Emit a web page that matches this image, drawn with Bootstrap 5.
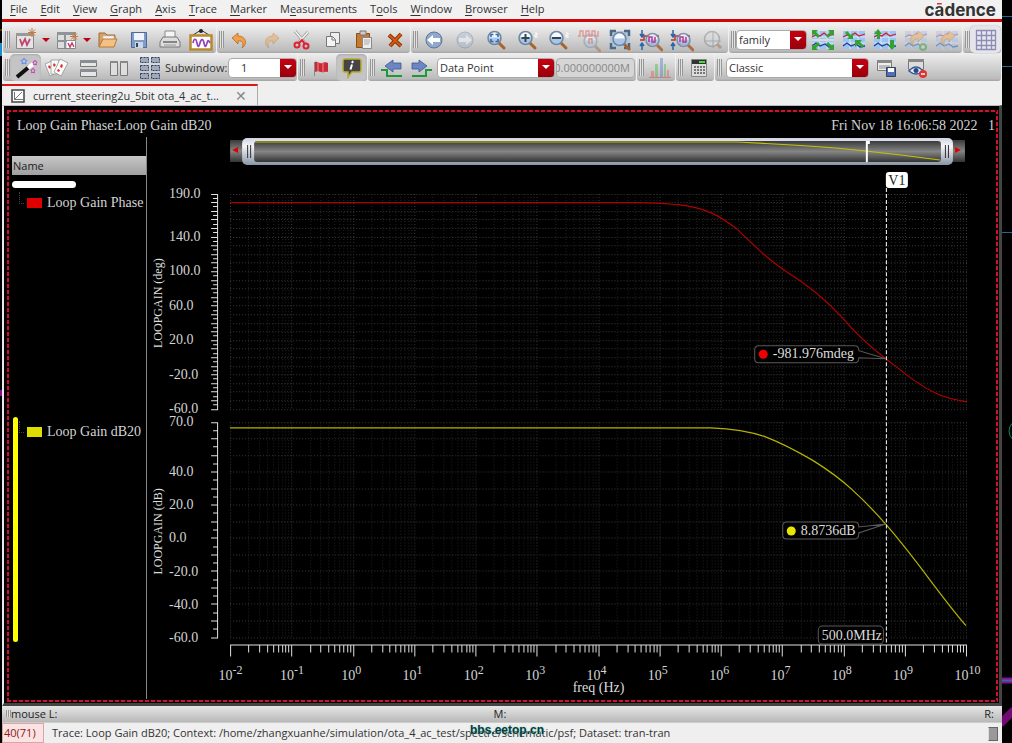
<!DOCTYPE html>
<html lang="en">
<head>
<meta charset="utf-8">
<meta name="viewport" content="width=device-width, initial-scale=1">
<title>Waveform viewer</title>
<link href="https://cdn.jsdelivr.net/npm/bootstrap@5.3.0/dist/css/bootstrap.min.css" rel="stylesheet">
<style>
body{background:#000;color:#333;font:11px/16px "Open Sans","Noto Sans",sans-serif;overflow:hidden}
.desk{display:grid;grid-template-columns:2px minmax(0,1fr) 10px;min-height:100vh}
.app-menu{background:#f1f1f1;height:22px;border-bottom:3px solid #cd0606;padding:0 6px 0 8px}
.app-menu a{color:#333;text-decoration:none;line-height:18px}
.app-menu u{text-underline-offset:2px}
.brand{font:bold 17px/20px Inter,sans-serif;color:#333}
.brand span{background:linear-gradient(#e03030 0 6px,#333 6px);-webkit-background-clip:text;background-clip:text;color:transparent}
.bars{background:#efefef;padding:4px 1px 0}
.tool-row{gap:1px;height:28px}
.tool-group{height:27px;padding:0 0 0 2px;background:linear-gradient(#ececec,#d4d4d4 45%,#bbb 92%,#a2a2a2);border-radius:3px}
.grip{width:5px;height:17px;flex:none;background:repeating-linear-gradient(90deg,#969696 0 1px,#e2e2e2 1px 2px)}
.tb{border:0;background:none;padding:0;width:31px;height:27px;flex:none;display:flex;align-items:center;justify-content:center}
.tb.pressed{background:#c4c4c4;border-radius:5px;box-shadow:inset 0 1px 2px #aaa}
.tb.lit{background:#e4e4ea;border-radius:5px;box-shadow:0 0 2px #aaa}
.tb svg{width:24px;height:24px}
.tb.drop{width:10px}
.tb.drop svg{width:8px;height:8px}
.dim{opacity:.42}
.pick{height:20px;border:1px solid #aaa;border-radius:4px;font-size:11px;line-height:16px;color:#333;padding:0 18px 0 2px;appearance:none;flex:none;
background:url("data:image/svg+xml,%3Csvg xmlns='http://www.w3.org/2000/svg' viewBox='0 0 8 5'%3E%3Cpath d='M0 0h8L4 4z' fill='%23fff'/%3E%3C/svg%3E") no-repeat right 4px center/8px 5px,linear-gradient(#c60010,#98000b) no-repeat right/16px 100%,#fff}
.w-sub{width:69px;padding-left:12px}.w-fam{width:71px}.w-point{width:118px}.w-classic{width:143px}
.sub-label{width:63px;white-space:nowrap}
.val{width:79px;height:20px;border:1px solid #aaa;border-radius:4px;background:#d6d6d6;color:#888;font-size:11px;padding:0 4px 0 0;direction:rtl;margin:0 1px}
.tabs{background:#efefef;height:23px}
.tab-one{width:256px;height:21px;border-top:2px solid #d81818;border-right:1px solid #aaa;padding:0 10px 0 9px;margin-top:2px}
.tab-one .closer{border:0;background:none;padding:0;color:#888;font-size:14px;line-height:14px}
.plot-frame{background:#000;border:solid;border-width:1px 3px 3px 2px;border-color:#bbb #444 #444 #e8e8ee;padding:4px 1px 1px 3px;color:#d4d4d4;font-family:"Liberation Serif",serif;font-size:14px}
.plot-edge{--h:repeating-linear-gradient(90deg,#cb1330 0 4px,#2b0008 4px 6px);--v:repeating-linear-gradient(#cb1330 0 4px,#2b0008 4px 6px);
background:var(--h) top/100% 2px,var(--h) bottom/100% 2px,var(--v) left/2px 100%,var(--v) right/2px 100%;background-repeat:no-repeat;padding:6px 3px 3px}
.plot-head{height:21px;padding:0 0 0 7px;line-height:20px}
.legend-col{width:137px;flex:none;border-right:1px solid #888;padding:19px 0 0 2px}
.legend-name{background:linear-gradient(#c6c6c6,#a0a0a0);color:#222;font:11px/19px "Open Sans",sans-serif;padding-left:1px}
.pill{width:64px;height:7px;border-radius:4px;background:#fff;margin-top:6px}
.strip{border-left:5px solid transparent;padding-left:1px}
.strip-a{height:229px}
.strip-b{height:225px;position:relative}
.strip-b::before{content:"";position:absolute;left:-4px;top:0;bottom:0;width:5px;border-radius:3px;background:#ff0}
.entry{gap:5px;line-height:30px;white-space:nowrap}
.elbow{width:5px;height:12px;border:1px dotted #444;border-width:0 0 1px 1px;margin:0 -2px 10px 1px}
.swatch{width:15px;height:10px;flex:none}
.chart{display:block;width:100%;height:auto}
.mouse-bar{background:linear-gradient(#e6e6e6,#b8b8b8);height:16px;padding:0 8px 0 4px;color:#222}
.status{background:#efefef;height:20px;border-top:1px solid #ccc;flex:1 0 auto;line-height:19px;color:#333}
.count{width:42px;background:#fbe3e3;border:1px solid #d9a5a5;color:#822;padding-left:1px;line-height:17px}
.water{position:absolute;left:468px;top:-3px;font:bold 12px/20px "Liberation Sans",sans-serif;color:#063c3c;text-shadow:0 0 2px #8fd8c8}
.thumb{width:10px;height:14px;background:#999;border:1px solid #666;border-left-color:#ddd}
</style>
</head>
<body>
<svg width="0" height="0" class="position-absolute" aria-hidden="true">
<defs>
<symbol id="lens" viewBox="0 0 24 24"><path d="M15 15l5 5" stroke="#a9622a" stroke-width="3" stroke-linecap="round"/><circle cx="10.500" cy="10" r="6.500" fill="#a9c6e6" stroke="#71879e" stroke-width="1.500"/><path d="M5.500 9.500a5 5 0 0 1 10 0z" fill="#f4f9ff"/></symbol>
<symbol id="waves" viewBox="0 0 24 24"><path d="M1 3h22v18H1z" fill="#9cc3f2"/><path d="M1 9h22M1 15h22M8 3v18M16 3v18" stroke="#dbe9fb"/><path d="M1 9l4-2 4 1 4-3 4 3 6-2" fill="none" stroke="#d02030" stroke-width="1.300"/><path d="M1 18l4-3 4 3 5-2 4 3 5-1" fill="none" stroke="#223f8f" stroke-width="1.300"/></symbol>
<symbol id="curl" viewBox="0 0 24 24"><path d="M4 10l6-5v3c8 0 10 8 4 12 2-4 1-8-4-7v3z" fill="#f0a04b" stroke="#b8681c" stroke-width=".8"/></symbol>
</defs>
</svg>
<div class="desk">
<svg width="2" height="743" aria-hidden="true"><path d="M0 43h2v13H0z" fill="#1a8fd0"/><path d="M0 30h2" stroke="#a60"/><path d="M0 393h2" stroke="#818" stroke-width="6"/></svg>
<main class="d-flex flex-column">
<nav class="app-menu d-flex align-items-start" aria-label="Main menu">
<div class="d-flex flex-grow-1" style="gap:13px">
<a href="#"><u>F</u>ile</a><a href="#"><u>E</u>dit</a><a href="#"><u>V</u>iew</a><a href="#"><u>G</u>raph</a><a href="#"><u>A</u>xis</a><a href="#"><u>T</u>race</a><a href="#"><u>M</u>arker</a><a href="#">M<u>e</u>asurements</a><a href="#">T<u>o</u>ols</a><a href="#"><u>W</u>indow</a><a href="#"><u>B</u>rowser</a><a href="#"><u>H</u>elp</a>
</div>
<div class="brand">c<span>ā</span>dence</div>
</nav>

<div class="bars">
<div class="tool-row d-flex">
<div class="tool-group d-flex align-items-center"><i class="grip"></i>
<button class="tb" aria-label="New window"><svg viewBox="0 0 24 24"><path d="M2.500 5.500h17v15h-17z" fill="#e4e4e4" stroke="#888"/><path d="M2 5h18v3H2z" fill="#999"/><path d="M6 11l2 6 3-6 2 6 3-6" fill="none" stroke="#c04070" stroke-width="1.700"/><path d="M18 0v9M14 4.500h8M15 1.500l6 6M21 1.500l-6 6" stroke="#c77a38"/></svg></button>
<button class="tb drop" aria-label="Window options"><svg viewBox="0 0 8 8"><path d="M0 2h8L4 6z" fill="#c00010"/></svg></button>
<button class="tb" aria-label="New subwindow"><svg viewBox="0 0 24 24"><path d="M2.500 4.500h18v16h-18z" fill="#ddd" stroke="#888"/><path d="M2 4h19v3H2zM9 6h2v14H9zM2 12h19v2H2z" fill="#8e949a"/><path d="M12 13h8v7h-8z" fill="#fff"/><path d="M13 15l2 4 2-4 2 4" fill="none" stroke="#c04070" stroke-width="1.500"/><path d="M19 4v9M15 8.500h8M16 5.500l6 6M22 5.500l-6 6" stroke="#c77a38"/></svg></button>
<button class="tb drop" aria-label="Subwindow options"><svg viewBox="0 0 8 8"><path d="M0 2h8L4 6z" fill="#c00010"/></svg></button>
<button class="tb" aria-label="Open"><svg viewBox="0 0 24 24"><path d="M3 19V5h6l2 2h8v4" fill="#d9a066" stroke="#a66a2c"/><path d="M7 8h11v8H7z" fill="#f7f7f7" stroke="#bbb" stroke-width=".7"/><path d="M3 19l4-8h14l-3 8z" fill="#f4c183" stroke="#b67a3a"/></svg></button>
<button class="tb" aria-label="Save"><svg viewBox="0 0 24 24"><path d="M4.500 4.500h15v15h-15z" fill="#7f9cc8" stroke="#4d6a9b"/><path d="M7 5h10v7H7z" fill="#f0f4fa"/><path d="M8 14h8v6H8z" fill="#ccd6e8"/><path d="M9 15h2v4H9z" fill="#345"/></svg></button>
<button class="tb" aria-label="Print"><svg viewBox="0 0 24 24"><path d="M7 3h10v9H7z" fill="#f6f6f6" stroke="#888"/><path d="M5 9h14l3 5v5H2v-5z" fill="#ddd" stroke="#777"/><path d="M5 14h14" stroke="#666" stroke-width="1.500"/><path d="M6 17h12" stroke="#999"/></svg></button>
<button class="tb" aria-label="Snapshot"><svg viewBox="0 0 24 24"><path d="M4 7l8-5 8 5" fill="none" stroke="#333"/><circle cx="12" cy="3" r="2" fill="#222"/><path d="M1.500 7.500h21v14h-21z" fill="#fff" stroke="#b88a30" stroke-width="2.500"/><path d="M4 15c1-5 3-5 4 0s2 4 3 0 3-5 4 0 2 4 3 0 2-2 3 0" fill="none" stroke="#9442b8" stroke-width="1.700"/></svg></button>
</div>
<div class="tool-group d-flex align-items-center"><i class="grip"></i>
<button class="tb" aria-label="Undo"><svg viewBox="0 0 24 24"><use href="#curl"/></svg></button>
<button class="tb dim" aria-label="Redo"><svg viewBox="0 0 24 24"><use href="#curl" transform="matrix(-1 0 0 1 24 0)"/></svg></button>
<button class="tb" aria-label="Cut"><svg viewBox="0 0 24 24"><path d="M5 3l10 12M18 4L9 14" stroke="#999" stroke-width="3"/><path d="M5 3l10 12M18 4L9 14" stroke="#f4f4f4" stroke-width="1.500"/><circle cx="7" cy="17" r="2.500" fill="none" stroke="#d23" stroke-width="2"/><circle cx="16" cy="18" r="2.500" fill="none" stroke="#d23" stroke-width="2"/><path d="M9 15l3-3 3 4" fill="none" stroke="#d23" stroke-width="2"/></svg></button>
<button class="tb" aria-label="Copy"><svg viewBox="0 0 24 24"><path d="M9.500 4.500h9v11h-9z" fill="#eee" stroke="#777"/><path d="M5.500 8.500h6l3 3v7h-9z" fill="#f4f4f4" stroke="#777"/><path d="M11 9v3h3" fill="none" stroke="#777"/></svg></button>
<button class="tb" aria-label="Paste"><svg viewBox="0 0 24 24"><path d="M4.500 5.500h13v14h-13z" fill="#c67a34" stroke="#8d4d16"/><path d="M8 3h6v4H8z" fill="#ccc" stroke="#777"/><path d="M10.500 9.500h9v11h-9z" fill="#eee" stroke="#888"/><path d="M12 12h6M12 14h6M12 16h5" stroke="#aaa"/></svg></button>
<button class="tb" aria-label="Delete"><svg viewBox="0 0 24 24"><path d="M6 7l12 11M18 6L7 18" stroke="#8c3100" stroke-width="4"/><path d="M6 7l12 11M18 6L7 18" stroke="#cf5a12" stroke-width="2"/></svg></button>
</div>
<div class="tool-group d-flex align-items-center"><i class="grip"></i>
<button class="tb" aria-label="Previous view"><svg viewBox="0 0 24 24"><circle cx="12" cy="12" r="8" fill="#8fa9cc" stroke="#5c7498"/><path d="M5 12l6-5v3h7v4h-7v3z" fill="#fff"/></svg></button>
<button class="tb dim" aria-label="Next view"><svg viewBox="0 0 24 24"><circle cx="12" cy="12" r="8" fill="#a9bbd6" stroke="#6a7d9d"/><path d="M19 12l-6-5v3H6v4h7v3z" fill="#fff"/></svg></button>
<button class="tb" aria-label="Fit"><svg viewBox="0 0 24 24"><use href="#lens"/><path d="M7 9V6.500h2.500M11.500 6.500H14V9M14 11v2.500h-2.500M9.500 13.500H7V11" fill="none" stroke="#3b6ba5" stroke-width="1.600"/></svg></button>
<button class="tb" aria-label="Zoom in"><svg viewBox="0 0 24 24"><use href="#lens"/><path d="M10.500 6v8M6.500 10h8" stroke="#345" stroke-width="2"/><path d="M20 5h2v2h-2v2h3" fill="none" stroke="#fff"/></svg></button>
<button class="tb" aria-label="Zoom out"><svg viewBox="0 0 24 24"><use href="#lens"/><path d="M6 10h9" stroke="#345" stroke-width="2"/><path d="M20 5h2v2h-2v2h3" fill="none" stroke="#fff"/></svg></button>
<button class="tb dim" aria-label="Zoom trace"><svg viewBox="0 0 24 24"><use href="#lens" x="3" y="3"/><path d="M1 8h2V3h3v5h3V3h3v5h3V3h3v5h3V3M12 16v-5h3v5" fill="none" stroke="#d33" stroke-width="1.300"/></svg></button>
<button class="tb" aria-label="Zoom area"><svg viewBox="0 0 24 24"><path d="M2 3h20v17H2z" fill="#b4c6da"/><path d="M3 8V3h5M16 3h5v5M21 15v5h-5M8 20H3v-5" fill="none" stroke="#4b6884" stroke-width="2.500"/><use href="#lens" x="1" y="1"/></svg></button>
<button class="tb" aria-label="Zoom Y"><svg viewBox="0 0 24 24"><path d="M3 2v7M3 22v-7M1 6l2 3 2-3M1 18l2-3 2 3" fill="none" stroke="#2466a8" stroke-width="1.500"/><path d="M1 12h4V8h5v8h5V8h5" fill="none" stroke="#b33" stroke-width="1.500"/><use href="#lens" x="3" y="2" opacity=".85"/><path d="M10 14v-5h3v5h3V9" fill="none" stroke="#b0389a" stroke-width="1.500"/></svg></button>
<button class="tb" aria-label="Zoom X"><svg viewBox="0 0 24 24"><path d="M3 2v7M3 22v-7M1 6l2 3 2-3M1 18l2-3 2 3" fill="none" stroke="#2466a8" stroke-width="1.500"/><path d="M1 12h4V8h5v8h5V8h5" fill="none" stroke="#b33" stroke-width="1.500"/><use href="#lens" x="3" y="2" opacity=".85"/><path d="M10 14v-5h3v5h3V9" fill="none" stroke="#b0389a" stroke-width="1.500"/></svg></button>
<button class="tb dim" aria-label="Zoom reset"><svg viewBox="0 0 24 24"><path d="M15 15l5 5" stroke="#a9622a" stroke-width="3"/><circle cx="11" cy="11" r="7.500" fill="#d8dde2" stroke="#777" stroke-width="1.500"/><path d="M3 13h17M12 3v17" stroke="#777"/></svg></button>
</div>
<div class="tool-group d-flex align-items-center"><i class="grip"></i>
<select class="pick w-fam" aria-label="Scope"><option>family</option></select>
<button class="tb" aria-label="Expand"><svg viewBox="0 0 24 24"><use href="#waves"/><path d="M1 11h22v2H1z" fill="#dadada"/><path d="M1 2h6L5 4l4 4-2 2-4-4-2 2zM23 2h-6l2 2-4 4 2 2 4-4 2 2zM1 22h6l-2-2 4-4-2-2-4 4-2-2zM23 22h-6l2-2-4-4 2-2 4 4 2-2z" fill="#35a22c"/></svg></button>
<button class="tb" aria-label="Merge"><svg viewBox="0 0 24 24"><use href="#waves"/><path d="M11 11H5l2-2-4-4 2-2 4 4 2-2zM13 12h7l-2 2 4 4-2 2-4-4-3 3z" fill="#35a22c"/></svg></button>
<button class="tb" aria-label="Split"><svg viewBox="0 0 24 24"><use href="#waves"/><path d="M5 1l4 5H7v5H4V6H1zM19 22l-4-5h2v-5h4v5h2z" fill="#35a22c"/></svg></button>
<button class="tb dim" aria-label="Replay add"><svg viewBox="0 0 24 24"><use href="#waves"/><use href="#curl" transform="matrix(-1 0 0 1 24 -2)"/><circle cx="19" cy="19" r="4" fill="#2b9a2b"/><path d="M17 19h4M19 17v4" stroke="#fff"/></svg></button>
<button class="tb dim" aria-label="Replay"><svg viewBox="0 0 24 24"><use href="#waves"/><use href="#curl" transform="matrix(-1 0 0 1 24 -2)"/></svg></button>
</div>
<div class="tool-group d-flex align-items-center flex-grow-1"><i class="grip"></i>
<button class="tb lit" aria-label="Grid"><svg viewBox="0 0 24 24"><path d="M2 2h20v20H2z" fill="#e6e6f0"/><path d="M2.500 2v20M7.500 2v20M12.500 2v20M17.500 2v20M21.500 2v20M2 2.500h20M2 7.500h20M2 12.500h20M2 17.500h20M2 21.500h20" stroke="#8d8db4" stroke-width="1.300"/></svg></button>
</div>
</div>

<div class="tool-row d-flex">
<div class="tool-group d-flex align-items-center"><i class="grip"></i>
<button class="tb pressed" aria-label="Wand"><svg viewBox="0 0 24 24"><path d="M3 21L15 11" stroke="#111" stroke-width="4"/><path d="M14 12l5-4" stroke="#fff" stroke-width="4"/><path d="M10 2l1 2 2 .5-1.500 1.500.5 2-2-1-2 1 .5-2L7 4.500 9 4z" fill="none" stroke="#58f"/><path d="M21 4l.7 1.500 1.500.5-1 1 .2 2-1.400-.8-1.400.8.2-2-1-1 1.500-.5zM19 12l.7 1.500 1.500.5-1 1 .2 2-1.400-.8-1.400.8.2-2-1-1 1.500-.5z" fill="none" stroke="#c4b"/></svg></button>
<button class="tb" aria-label="Cards"><svg viewBox="0 0 24 24"><g fill="#fafafa" stroke="#888" stroke-width=".7"><path d="M0 8l7-3 4 12-6 3z"/><path d="M6 4h8v14H6z"/><path d="M15 3l8 4-7 13-7-4z"/></g><path d="M4 9l2 2-1 2-2-2zM9 7l2 2-2 2-1-2zM16 8l2 1-1 3-2-1zM13 13l2 1-1 2-2-1z" fill="#d33"/></svg></button>
<button class="tb" aria-label="Stack rows"><svg viewBox="0 0 24 24"><g fill="#e6e6e6" stroke="#777"><path d="M4.500 4.500h16v6h-16zM4.500 13.500h16v7h-16z"/></g><path d="M4 4h17v3H4zM4 13h17v3H4z" fill="#8a8e92"/></svg></button>
<button class="tb" aria-label="Stack columns"><svg viewBox="0 0 24 24"><g fill="#ddd" stroke="#777"><path d="M3.500 5.500h7v14h-7zM13.500 5.500h7v14h-7z"/></g><path d="M3 5h8v2H3zM13 5h8v2h-8z" fill="#888"/></svg></button>
<button class="tb" aria-label="Tile"><svg viewBox="0 0 24 24"><g fill="#a3a9b2" stroke="#223f73" stroke-dasharray="2 1"><path d="M2.500 1.500h8v5h-8zM13.500 1.500h8v5h-8zM2.500 9.500h8v5h-8zM13.500 9.500h8v5h-8zM2.500 17.500h8v5h-8zM13.500 17.500h8v5h-8z"/></g></svg></button>
<label for="sub" class="sub-label">Subwindow:</label>
<select id="sub" class="pick w-sub"><option>1</option></select>
</div>
<div class="tool-group d-flex align-items-center"><i class="grip"></i>
<button class="tb" aria-label="Flag"><svg viewBox="0 0 24 24"><path d="M5.500 6v14" stroke="#888"/><path d="M6 6c3-1 4 2 7 1s4-1 6 0v9c-3-1-4 1-7 0s-4-1-6 0z" fill="#c92a38"/><path d="M9 6v10M14 7v10" stroke="#e88"/></svg></button>
<button class="tb pressed" aria-label="Info"><svg viewBox="0 0 24 24"><path d="M5 3h14q2 0 2 2v9q0 2-2 2h-7l-4 5v-5H5q-2 0-2-2V5q0-2 2-2z" fill="#454545" stroke="#b8ab33" stroke-width="1.500"/><path d="M13 5l-1 2M12 8.500l-1.500 5" stroke="#fff" stroke-width="2"/></svg></button>
</div>
<div class="tool-group d-flex align-items-center"><i class="grip"></i>
<button class="tb" aria-label="Previous point"><svg viewBox="0 0 24 24"><path d="M2 14h6v6h15" fill="none" stroke="#1b9a35" stroke-width="2"/><path d="M6 10l8-6v3h8v6h-8v3z" fill="#6b86c4" stroke="#3c5590" stroke-width=".8"/></svg></button>
<button class="tb" aria-label="Next point"><svg viewBox="0 0 24 24"><path d="M2 20h14v-6h6" fill="none" stroke="#1b9a35" stroke-width="2"/><path d="M17 10L9 4v3H2v6h7v3z" fill="#6b86c4" stroke="#3c5590" stroke-width=".8"/></svg></button>
<select class="pick w-point" aria-label="Snap mode"><option>Data Point</option></select>
<input class="val" type="text" value="0.000000000M" aria-label="Snap value" disabled>
</div>
<div class="tool-group d-flex align-items-center"><i class="grip"></i>
<button class="tb dim" aria-label="Histogram"><svg viewBox="0 0 24 24"><path d="M3 15h3v6H3z" fill="#e55"/><path d="M7 8h3v13H7z" fill="#4b4"/><path d="M12 2h3v19h-3z" fill="#57c"/><path d="M16 8h2v13h-2z" fill="#4b4"/><path d="M19 14h2v7h-2z" fill="#e55"/><path d="M1 21.500h22" stroke="#e22"/></svg></button>
</div>
<div class="tool-group d-flex align-items-center"><i class="grip"></i>
<button class="tb" aria-label="Calculator"><svg viewBox="0 0 24 24"><path d="M4.500 3.500h15v17h-15z" fill="#ddd" stroke="#888"/><path d="M5 4h14v4H5z" fill="#333"/><path d="M12 5h6v2h-6z" fill="#4d3"/><path d="M7 11h11M7 14h11M7 17h11" stroke="#777" stroke-width="2" stroke-dasharray="2 1"/></svg></button>
</div>
<div class="tool-group d-flex align-items-center flex-grow-1"><i class="grip me-1"></i>
<select class="pick w-classic" aria-label="Workspace"><option>Classic</option></select>
<button class="tb" aria-label="Save workspace"><svg viewBox="0 0 24 24"><path d="M4.500 4.500h14v10h-14z" fill="#eee" stroke="#777"/><path d="M4 4h15v3H4z" fill="#888"/><path d="M6 10h11M6 12h8" stroke="#888"/><path d="M13.500 11.500h9v9h-9z" fill="#4f70b8" stroke="#345"/><path d="M15 12h6v4h-6z" fill="#fff"/></svg></button>
<button class="tb" aria-label="Remove workspace"><svg viewBox="0 0 24 24"><path d="M4.500 3.500h15v10h-15z" fill="#ddd" stroke="#777"/><path d="M4 3h16v3H4z" fill="#888"/><path d="M5 15q7-8 14 0-7 6-14 0z" fill="#e8eefa" stroke="#345a90" stroke-width="1.500"/><circle cx="12" cy="14.500" r="2.500" fill="#27498a"/><circle cx="19" cy="18" r="4" fill="#d33"/><path d="M17 18h4" stroke="#fff" stroke-width="1.500"/></svg></button>
</div>
</div>
</div>

<div class="tabs"><div class="tab-one d-flex align-items-center">
<svg width="14" height="14" viewBox="0 0 14 14" class="me-2"><path d="M1 1h12v12H1z" fill="#fff" stroke="#444" stroke-width="1.500"/><path d="M3 10.500h9M3.500 3v8M4 10l7-7" stroke="#777"/></svg>
<span class="flex-grow-1">current_steering2u_5bit ota_4_ac_t...</span><button class="closer" aria-label="Close tab">✕</button></div></div>

<section class="plot-frame"><div class="plot-edge">
<div class="plot-head d-flex justify-content-between"><span>Loop Gain Phase:Loop Gain dB20</span><span>Fri Nov 18 16:06:58 2022 &nbsp; 1</span></div>
<div class="d-flex">
<aside class="legend-col">
<div class="legend-name">Name</div>
<div class="pill"></div>
<div class="strip strip-a"><div class="entry d-flex align-items-center"><i class="elbow"></i><i class="swatch" style="background:#e00000"></i><span>Loop Gain Phase</span></div></div>
<div class="strip strip-b"><div class="entry d-flex align-items-center"><i class="elbow"></i><i class="swatch" style="background:#dede00"></i><span>Loop Gain dB20</span></div></div>
</aside>
<svg class="chart" viewBox="147 137 847 561" fill="none" font-family="Liberation Serif, serif" font-size="14" role="img" aria-label="Loop gain phase and magnitude against frequency">
<defs><linearGradient id="tube" x2="0" y2="1"><stop stop-color="#3a3a3a"/><stop offset=".5" stop-color="#858585"/><stop offset="1" stop-color="#333"/></linearGradient>
<linearGradient id="hull" x2="0" y2="1"><stop stop-color="#cfd2e0"/><stop offset=".3" stop-color="#f6f6f8"/><stop offset="1" stop-color="#8795a5"/></linearGradient></defs>
<path d="M230 140h734v22H230z" fill="url(#tube)"/>
<rect x="242" y="138" width="710" height="27" rx="5" fill="url(#hull)"/>
<rect x="254" y="141" width="686" height="21" rx="3" fill="url(#tube)"/>
<path d="M255 142H737L765 143.500 800 145.500 835 148 865 151 900 155 939 160" stroke="#c3c300" stroke-width="1.200"/>
<path d="M866 141v21" stroke="#fff" stroke-width="2"/><path d="M866 141h3v3h-3z" fill="#fff"/>
<path d="M247.500 145v13M250.500 145v13M944.500 145v13M947.500 145v13" stroke="#333"/>
<path d="M238 147v6l-6-3zM954 147v6l6-3z" fill="#e00000"/>
<g id="grid"></g><g id="axes" stroke="#e0e0e0"></g><g id="ticktext" fill="#d4d4d4"></g>
<path d="M230 202.500H640C665 203 680 204 695 207.500 712 212 720 217 735 228 752 243 762 256 785 271 806 284 822 296 840 316 853 331 868 346 885 358.500 905 374 918 385 935 393 948 399 956 400 966 401.500" stroke="#b00000" stroke-width="1.200"/>
<path d="M230 427.500H710C735 428.500 750 431 766 437 784 444 800 453 812 460 828 470 838 477 851 489 864 501 874 511 885 524 900 541 912 557 925 574 940 594 952 610 965 625" stroke="#b4b400" stroke-width="1.200"/>
<path d="M885.500 188V644" stroke="#fff" stroke-dasharray="4 2"/>
<rect x="885" y="172" width="22" height="16" rx="3" fill="#fff"/><text x="896" y="185" fill="#222" text-anchor="middle">V1</text>
<g fill="#000" stroke="#5a5a5a"><rect x="817.500" y="625.500" width="65" height="18" rx="4"/>
<path d="M758 345.500h96q4 0 4 5l27 8-27-1q0 5-4 5h-96q-4 0-4-4v-9q0-4 4-4zM786 521.500h68q4 0 4 5l27-3-27 9q0 6-4 6h-68q-4 0-4-4v-9q0-4 4-4z"/></g>
<circle cx="762.500" cy="354" r="4.500" fill="#f00000"/><circle cx="790.500" cy="530.500" r="4.500" fill="#e6e600"/>
<g fill="#dcdcdc"><text x="772" y="358">-981.976mdeg</text><text x="800" y="535">8.8736dB</text><text x="821" y="639">500.0MHz</text>
<text x="598" y="691" text-anchor="middle">freq (Hz)</text>
<text transform="translate(162 303) rotate(-90)" text-anchor="middle" font-size="12">LOOPGAIN (deg)</text>
<text transform="translate(162 531) rotate(-90)" text-anchor="middle" font-size="12">LOOPGAIN (dB)</text></g>
</svg>
</div></div></section>

<div class="mouse-bar d-flex align-items-center"><span class="d-flex align-items-center" style="flex:1"><i class="grip" style="height:7px"></i>mouse L:</span><span>M:</span><span class="text-end" style="flex:1">R:</span></div>
<footer class="status d-flex position-relative"><span class="count">40(71)</span><span class="flex-grow-1 ps-2">Trace: Loop Gain dB20; Context: /home/zhangxuanhe/simulation/ota_4_ac_test/spectre/schematic/psf; Dataset: tran-tran</span><span class="water">bbs.eetop.cn</span><i class="thumb me-1 mt-1"></i></footer>
</main>
<svg width="10" height="743" fill="none" aria-hidden="true"><path d="M0 16.500h10M0 66.500h10M0 232.500h10" stroke="#1e6a94"/><circle cx="18" cy="431" r="11" stroke="#0a8a50"/><path d="M0 680.500h10" stroke="#8a0f8f" stroke-width="6"/><path d="M0 680.500h10" stroke="#36a" stroke-width="2"/><path d="M-2 724L12 710" stroke="#700b74" stroke-width="8"/></svg>
</div>
<script>
// Build the log-frequency grid, both value axes and their tick labels.
const X0=230.5, DEC=61.25, NS='http://www.w3.org/2000/svg';
const el=(parent,name,attrs,text)=>{const n=document.createElementNS(NS,name);for(const k in attrs)n.setAttribute(k,attrs[k]);if(text)n.textContent=text;document.getElementById(parent).append(n);return n};
const snap=v=>Math.floor(v)+.5;
const panels=[{hi:190,lo:-60,top:194,bottom:409,grid:10,labels:[190,140,100,60,20,-20,-60]},{hi:70,lo:-60,top:422,bottom:637,grid:10,labels:[70,40,20,0,-20,-40,-60]}];
let minor='',major='',axis='';
for(const p of panels){
  const y=v=>p.top+(p.hi-v)/(p.hi-p.lo)*(p.bottom-p.top);
  for(let v=p.hi;v>=p.lo;v-=5){const on=(p.hi-v)%p.grid===0;axis+=`M${on?211:213} ${snap(y(v))}H217`;if(on)major+=`M230 ${snap(y(v))}H966`}
  axis+=`M217.5 ${p.top}V${p.bottom+1}`;
  for(let d=0;d<=12;d++)for(let m=1;m<10;m++){if(d===12&&m>1)break;const s=`M${snap(X0+DEC*(d+Math.log10(m)))} ${p.top}V${p.bottom}`;m===1?major+=s:minor+=s}
  for(const v of p.labels)el('ticktext','text',{x:169,y:Math.round(y(v))+4},v.toFixed(1));
}
for(let d=0;d<=12;d++){
  for(let m=1;m<10;m++){if(d===12&&m>1)break;axis+=`M${snap(X0+DEC*(d+Math.log10(m)))} 644V${m===1?656:652}`}
  const t=el('ticktext','text',{x:X0+DEC*d-12,y:679},'10');
  const s=document.createElementNS(NS,'tspan');s.setAttribute('dy',-6);s.setAttribute('font-size',12);s.textContent=d-2;t.append(s);
}
el('grid','path',{d:minor,stroke:'#222','stroke-dasharray':'1 2'});
el('grid','path',{d:major,stroke:'#3a3a3a','stroke-dasharray':'1 2'});
el('axes','path',{d:axis+'M230 644.5H966'});
</script>
<script src="https://cdn.jsdelivr.net/npm/bootstrap@5.3.0/dist/js/bootstrap.bundle.min.js"></script>
</body>
</html>
